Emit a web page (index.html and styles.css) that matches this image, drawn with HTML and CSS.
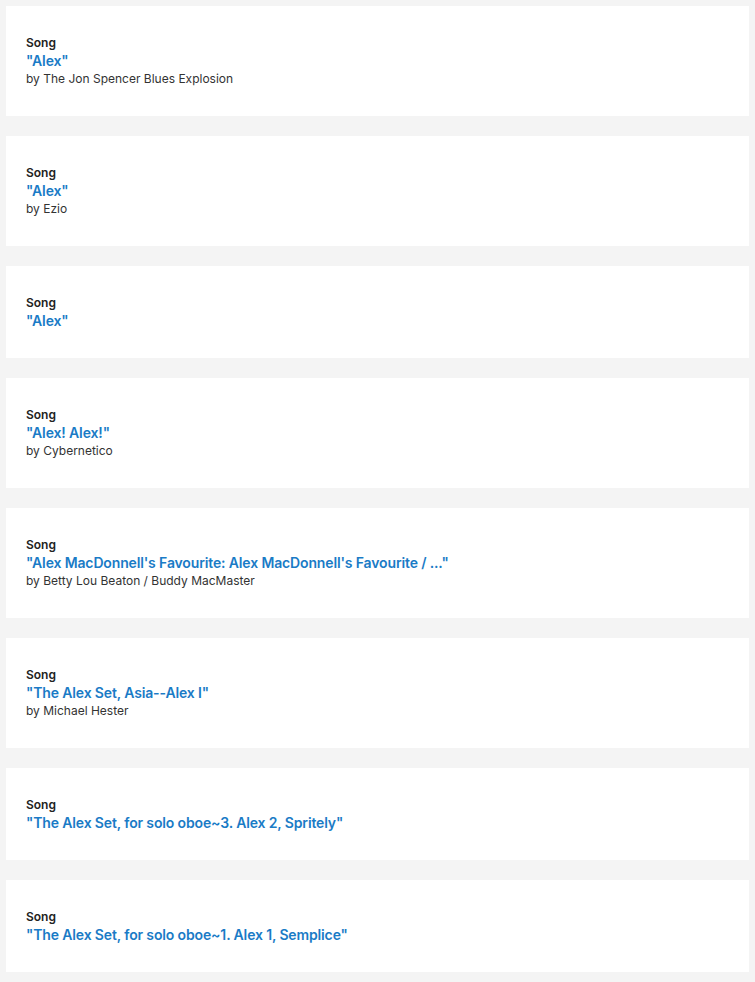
FILE: index.html
```html
<!DOCTYPE html>
<html>
<head>
<meta charset="utf-8">
<link rel="stylesheet" href="styles.css">
</head>
<body>
<div class="list">
  <div class="card"><div class="kind">Song</div><a class="title">"Alex"</a><div class="by">by The Jon Spencer Blues Explosion</div></div>
  <div class="card"><div class="kind">Song</div><a class="title">"Alex"</a><div class="by">by Ezio</div></div>
  <div class="card"><div class="kind">Song</div><a class="title">"Alex"</a></div>
  <div class="card"><div class="kind">Song</div><a class="title">"Alex! Alex!"</a><div class="by">by Cybernetico</div></div>
  <div class="card"><div class="kind">Song</div><a class="title">"Alex MacDonnell's Favourite: Alex MacDonnell's Favourite / ..."</a><div class="by">by Betty Lou Beaton / Buddy MacMaster</div></div>
  <div class="card"><div class="kind">Song</div><a class="title">"The Alex Set, Asia--Alex I"</a><div class="by">by Michael Hester</div></div>
  <div class="card"><div class="kind">Song</div><a class="title">"The Alex Set, for solo oboe~3. Alex 2, Spritely"</a></div>
  <div class="card"><div class="kind">Song</div><a class="title">"The Alex Set, for solo oboe~1. Alex 1, Semplice"</a></div>
</div>
</body>
</html>
```
FILE: styles.css
```css
html, body {
  margin: 0;
  padding: 0;
  background: #f4f4f4;
}
body {
  font-family: Inter, "Noto Sans", sans-serif;
  color: #222;
}
.list {
  display: flex;
  flex-direction: column;
  gap: 20px;
  padding: 6px 6px 10px 6px;
}
.card {
  background: #fff;
  padding: 28px 20px;
  display: flex;
  flex-direction: column;
}
.kind {
  font-size: 12px;
  line-height: 18px;
  font-weight: 600;
  color: #222;
}
.title {
  font-size: 14px;
  line-height: 18px;
  font-weight: 600;
  color: #1a7bc6;
  text-decoration: none;
  letter-spacing: -0.01em;
}
.by {
  font-size: 12px;
  line-height: 18px;
  color: #333;
}
```
